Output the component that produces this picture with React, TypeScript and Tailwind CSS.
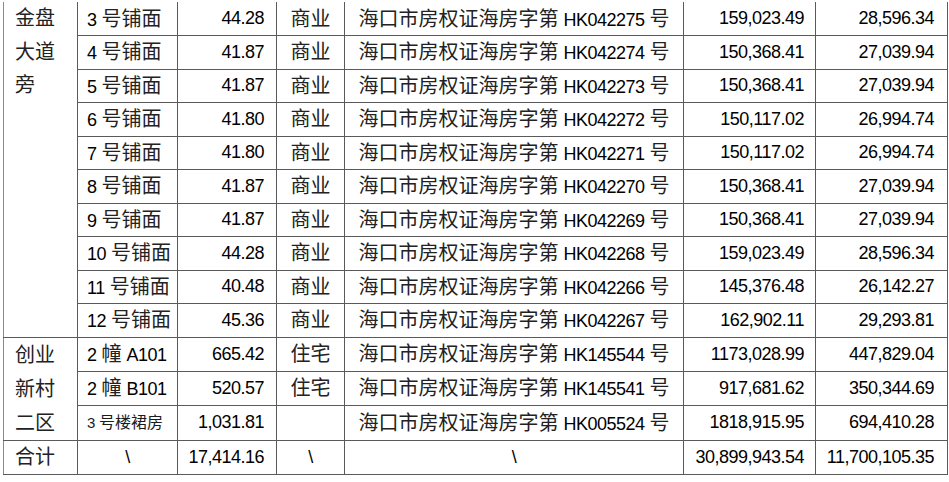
import React from "react";

function Mixed({ text, small }: { text: string; small?: boolean }) {
  const parts = text.split(/([\u4e00-\u9fff]+| )/).filter((p) => p.length > 0);
  return (
    <>
      {parts.map((p, i) =>
        p === " " ? (
          <span key={i} className={small ? "inline-block w-[4px]" : "inline-block w-[5px]"}>
            {"\u00a0"}
          </span>
        ) : /[\u4e00-\u9fff]/.test(p) ? (
          <span key={i} className={small ? "text-[16px]" : "text-[20px] text-[#222]"}>
            {p}
          </span>
        ) : (
          <span key={i} className={small ? "text-[15px] tracking-[-0.3px]" : "text-[18px] tracking-[-0.5px] text-black"}>
            {p}
          </span>
        )
      )}
    </>
  );
}

type Row = [string, string, string, string, string, string, boolean?];

const group1: Row[] = [
  ["3 号铺面", "44.28", "商业", "HK042275", "159,023.49", "28,596.34"],
  ["4 号铺面", "41.87", "商业", "HK042274", "150,368.41", "27,039.94"],
  ["5 号铺面", "41.87", "商业", "HK042273", "150,368.41", "27,039.94"],
  ["6 号铺面", "41.80", "商业", "HK042272", "150,117.02", "26,994.74"],
  ["7 号铺面", "41.80", "商业", "HK042271", "150,117.02", "26,994.74"],
  ["8 号铺面", "41.87", "商业", "HK042270", "150,368.41", "27,039.94"],
  ["9 号铺面", "41.87", "商业", "HK042269", "150,368.41", "27,039.94"],
  ["10 号铺面", "44.28", "商业", "HK042268", "159,023.49", "28,596.34"],
  ["11 号铺面", "40.48", "商业", "HK042266", "145,376.48", "26,142.27"],
  ["12 号铺面", "45.36", "商业", "HK042267", "162,902.11", "29,293.81"],
];

const group2: Row[] = [
  ["2 幢 A101", "665.42", "住宅", "HK145544", "1173,028.99", "447,829.04"],
  ["2 幢 B101", "520.57", "住宅", "HK145541", "917,681.62", "350,344.69"],
  ["3 号楼裙房", "1,031.81", "", "HK005524", "1818,915.95", "694,410.28", true],
];

const td = "border border-[#5a5a5a] p-0 whitespace-nowrap";

function Cells({ r }: { r: Row }) {
  return (
    <>
      <td className={`${td} text-left pl-[9px]`}>
        <Mixed text={r[0]} small={r[6]} />
      </td>
      <td className={`${td} text-right pr-[12px]`}>
        <Mixed text={r[1]} />
      </td>
      <td className={`${td} text-center`}>
        <Mixed text={r[2]} />
      </td>
      <td className={`${td} text-center`}>
        <Mixed text={`海口市房权证海房字第 ${r[3]} 号`} />
      </td>
      <td className={`${td} text-right pr-[11px]`}>
        <Mixed text={r[4]} />
      </td>
      <td className={`${td} text-right pr-[13px]`}>
        <Mixed text={r[5]} />
      </td>
    </>
  );
}

export default function App() {
  return (
    <div
      className="w-[949px] h-[482px] bg-white overflow-hidden pt-[2px] pl-[3px] text-[#1c1c1c]"
      style={{ fontFamily: '"Liberation Sans", "Noto Sans CJK SC", sans-serif' }}
    >
      <table className="table-fixed border-collapse w-[944px] border-t-0">
        <colgroup>
          <col className="w-[74px]" />
          <col className="w-[100px]" />
          <col className="w-[99px]" />
          <col className="w-[68px]" />
          <col className="w-[339px]" />
          <col className="w-[132px]" />
          <col className="w-[132px]" />
        </colgroup>
        <tbody>
          {group1.map((r, i) => (
            <tr key={i} className="h-[33.5px] [&>td]:border-t-0">
              {i === 0 && (
                <td
                  rowSpan={10}
                  className="border border-t-0 border-[#5a5a5a] border-l-[#8a8a8a] align-top pl-[11px] p-0 text-[20px] leading-[33.5px] text-[#222]"
                >
                  金盘
                  <br />
                  大道
                  <br />
                  旁
                </td>
              )}
              <Cells r={r} />
            </tr>
          ))}
          {group2.map((r, i) => (
            <tr key={i} className="h-[34px]">
              {i === 0 && (
                <td
                  rowSpan={3}
                  className="border border-[#5a5a5a] border-l-[#8a8a8a] align-top pl-[11px] p-0 text-[20px] leading-[34px] text-[#222]"
                >
                  创业
                  <br />
                  新村
                  <br />
                  二区
                </td>
              )}
              <Cells r={r} />
            </tr>
          ))}
          <tr className="h-[34px]">
            <td className={`${td} border-l-[#8a8a8a] pl-[11px] text-left`}>
              <Mixed text="合计" />
            </td>
            <td className={`${td} text-center`}>
              <Mixed text="\" />
            </td>
            <td className={`${td} text-right pr-[12px]`}>
              <Mixed text="17,414.16" />
            </td>
            <td className={`${td} text-center`}>
              <Mixed text="\" />
            </td>
            <td className={`${td} text-center`}>
              <Mixed text="\" />
            </td>
            <td className={`${td} text-right pr-[11px]`}>
              <Mixed text="30,899,943.54" />
            </td>
            <td className={`${td} text-right pr-[13px]`}>
              <Mixed text="11,700,105.35" />
            </td>
          </tr>
        </tbody>
      </table>
    </div>
  );
}
